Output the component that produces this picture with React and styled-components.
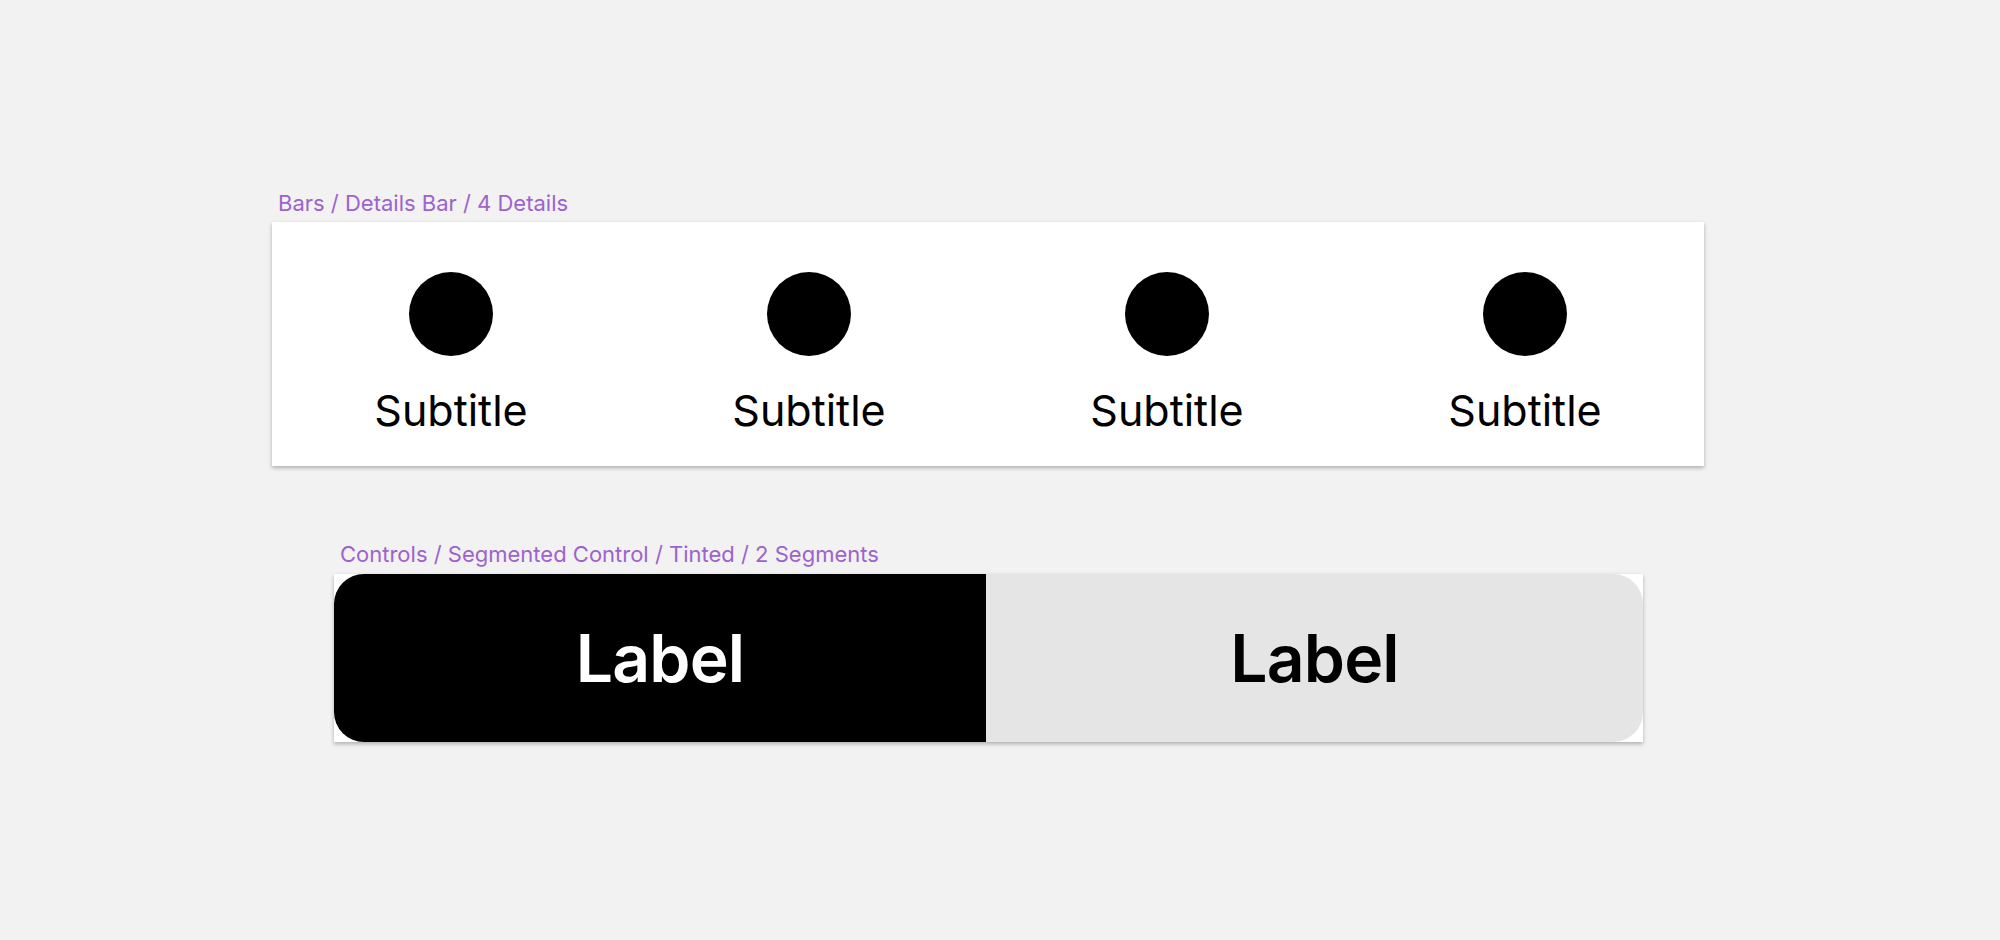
import React from 'react';
import styled, { createGlobalStyle } from 'styled-components';

const Global = createGlobalStyle`
  html, body {
    margin: 0;
    padding: 0;
    background: #f2f2f2;
    font-family: Inter, "Noto Sans", sans-serif;
  }
`;

const Page = styled.div`
  width: 2000px;
  height: 940px;
  padding-top: 190px;
  box-sizing: border-box;
  display: flex;
  flex-direction: column;
`;

const Section = styled.div`
  margin-left: ${(p) => p.left}px;
  width: ${(p) => p.width}px;
  margin-bottom: ${(p) => p.after || 0}px;
`;

const FrameLabel = styled.div`
  color: #9d63cc;
  font-size: 22px;
  line-height: 26px;
  padding-left: 6px;
  margin-bottom: ${(p) => p.gap}px;
  white-space: nowrap;
`;

const DetailsBar = styled.div`
  height: 244px;
  background: #fff;
  box-shadow: 0 2px 4px rgba(0, 0, 0, 0.28);
  display: grid;
  grid-template-columns: repeat(4, 1fr);
`;

const Detail = styled.div`
  display: flex;
  flex-direction: column;
  align-items: center;
  padding-top: 50px;
`;

const Dot = styled.div`
  width: 84px;
  height: 84px;
  border-radius: 50%;
  background: #000;
`;

const Subtitle = styled.div`
  margin-top: 29px;
  font-size: 43px;
  line-height: 50px;
  color: #000;
`;

const Segmented = styled.div`
  height: 168px;
  background: #fff;
  box-shadow: 0 2px 4px rgba(0, 0, 0, 0.28);
  display: grid;
  grid-template-columns: 652px 1fr;
`;

const Segment = styled.div`
  display: flex;
  align-items: center;
  justify-content: center;
  background: ${(p) => (p.selected ? '#000' : '#e5e5e5')};
  color: ${(p) => (p.selected ? '#fff' : '#000')};
  border-radius: ${(p) => (p.first ? '30px 0 0 30px' : '0 30px 30px 0')};
  font-size: 66px;
  font-weight: 600;
  letter-spacing: -0.8px;
`;

const details = ['Subtitle', 'Subtitle', 'Subtitle', 'Subtitle'];

export default function App() {
  return (
    <>
      <Global />
      <Page>
        <Section left={272} width={1432} after={75}>
          <FrameLabel gap={6}>Bars / Details Bar / 4 Details</FrameLabel>
          <DetailsBar>
            {details.map((d, i) => (
              <Detail key={i}>
                <Dot />
                <Subtitle>{d}</Subtitle>
              </Detail>
            ))}
          </DetailsBar>
        </Section>
        <Section left={334} width={1309}>
          <FrameLabel gap={7}>Controls / Segmented Control / Tinted / 2 Segments</FrameLabel>
          <Segmented>
            <Segment selected first>Label</Segment>
            <Segment>Label</Segment>
          </Segmented>
        </Section>
      </Page>
    </>
  );
}
